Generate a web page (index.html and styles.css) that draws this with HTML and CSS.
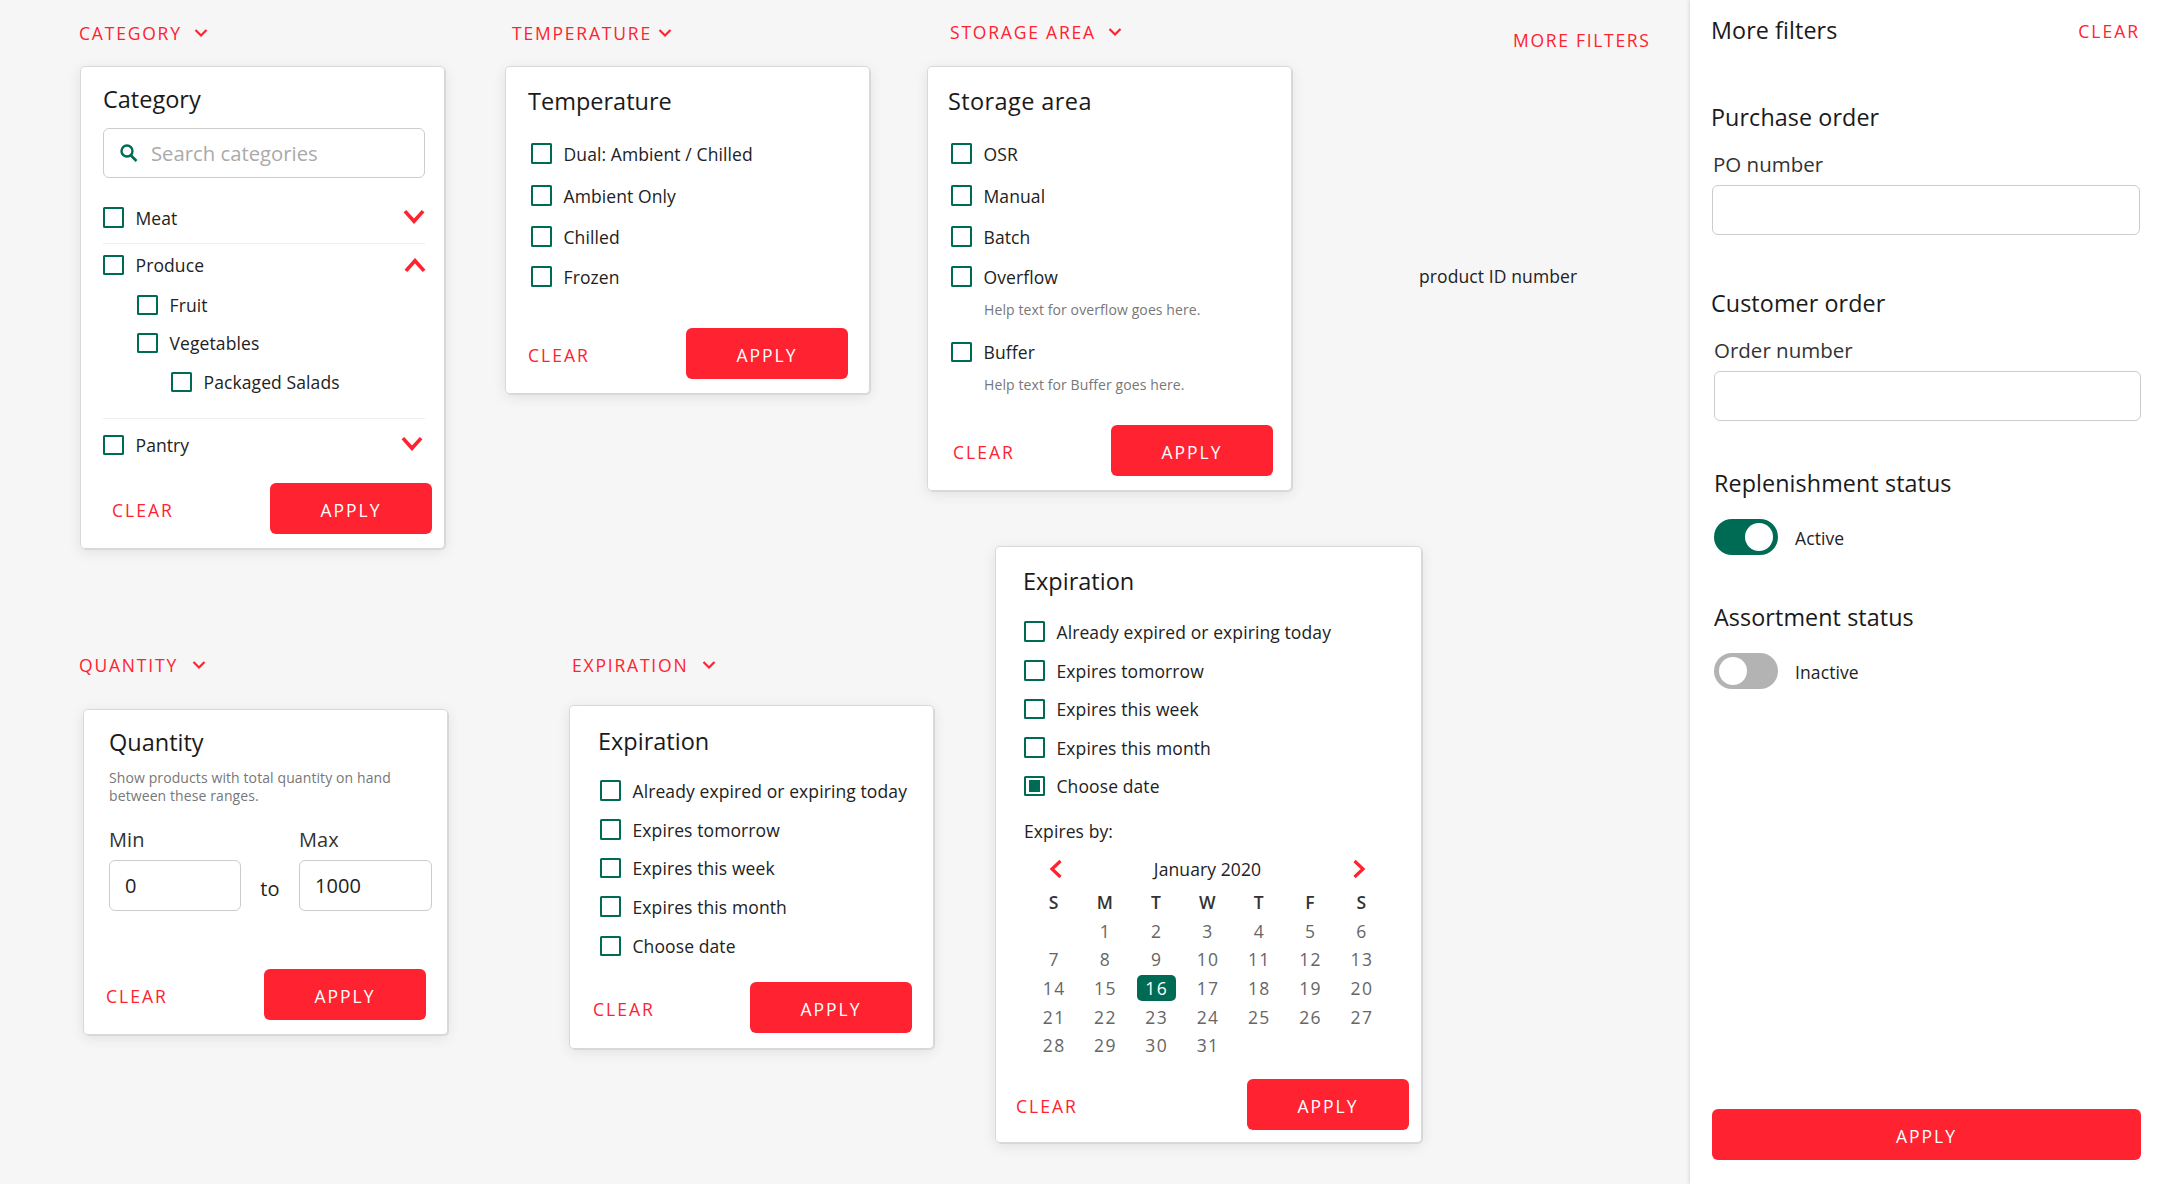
FILE: index.html
```html
<!DOCTYPE html>
<html lang="en">
<head>
    <meta charset="UTF-8">
    <title>Filters</title>
    <link rel="stylesheet" href="styles.css">
</head>
<body>
    <svg class="defs" width="0" height="0">
        <symbol id="chevron-down" viewBox="0 0 20 14"><path d="M1.500 2 10 11.500 18.500 2" fill="none" stroke="currentColor" stroke-width="3.400"/></symbol>
        <symbol id="chevron-up" viewBox="0 0 20 14"><path d="M1.500 12 10 2.500 18.500 12" fill="none" stroke="currentColor" stroke-width="3.400"/></symbol>
        <symbol id="chevron-small" viewBox="0 0 14 10"><path d="M1.500 2 7 7.500 12.500 2" fill="none" stroke="currentColor" stroke-width="2.200"/></symbol>
        <symbol id="chevron-left" viewBox="0 0 14 20"><path d="M11.500 2 3 10l8.500 8" fill="none" stroke="currentColor" stroke-width="3.200"/></symbol>
        <symbol id="chevron-right" viewBox="0 0 14 20"><path d="M2.500 2 11 10l-8.500 8" fill="none" stroke="currentColor" stroke-width="3.200"/></symbol>
    </svg>

    <main class="canvas">
        <section class="filter filter-category">
            <div class="filter-label">CATEGORY <svg class="chev-small"><use href="#chevron-small"/></svg></div>
            <div class="card card-category">
                <h3 class="card-title">Category</h3>
                <div class="search">
                    <svg class="search-icon" viewBox="0 0 20 20"><circle cx="8" cy="8" r="5.500" fill="none" stroke="currentColor" stroke-width="2.400"/><path d="m12 12.500 5.500 5.500" stroke="currentColor" stroke-width="2.600"/></svg>
                    <span>Search categories</span>
                </div>
                <div class="list list-tree">
                    <div class="row"><span class="box"></span>Meat<svg class="chev"><use href="#chevron-down"/></svg></div>
                    <div class="sep"></div>
                    <div class="row"><span class="box"></span>Produce<svg class="chev chev-open"><use href="#chevron-up"/></svg></div>
                    <div class="row indent-1"><span class="box"></span>Fruit</div>
                    <div class="row indent-1"><span class="box"></span>Vegetables</div>
                    <div class="row indent-2"><span class="box"></span>Packaged Salads</div>
                    <div class="sep sep-end"></div>
                    <div class="row"><span class="box"></span>Pantry<svg class="chev chev-pantry"><use href="#chevron-down"/></svg></div>
                </div>
                <div class="card-footer">
                    <span class="clear">CLEAR</span>
                    <span class="apply">APPLY</span>
                </div>
            </div>
        </section>

        <section class="filter filter-temperature">
            <div class="filter-label">TEMPERATURE <svg class="chev-small"><use href="#chevron-small"/></svg></div>
            <div class="card card-temperature">
                <h3 class="card-title">Temperature</h3>
                <div class="list list-temp">
                    <div class="row"><span class="box"></span>Dual: Ambient / Chilled</div>
                    <div class="row"><span class="box"></span>Ambient Only</div>
                    <div class="row"><span class="box"></span>Chilled</div>
                    <div class="row"><span class="box"></span>Frozen</div>
                </div>
                <div class="card-footer">
                    <span class="clear">CLEAR</span>
                    <span class="apply">APPLY</span>
                </div>
            </div>
        </section>

        <section class="filter filter-storage">
            <div class="filter-label">STORAGE AREA <svg class="chev-small"><use href="#chevron-small"/></svg></div>
            <div class="card card-storage">
                <h3 class="card-title">Storage area</h3>
                <div class="list list-storage">
                    <div class="row"><span class="box"></span>OSR</div>
                    <div class="row"><span class="box"></span>Manual</div>
                    <div class="row"><span class="box"></span>Batch</div>
                    <div class="row"><span class="box"></span>Overflow</div>
                    <div class="help">Help text for overflow goes here.</div>
                    <div class="row"><span class="box"></span>Buffer</div>
                    <div class="help">Help text for Buffer goes here.</div>
                </div>
                <div class="card-footer">
                    <span class="clear">CLEAR</span>
                    <span class="apply">APPLY</span>
                </div>
            </div>
        </section>

        <a class="more-filters">MORE FILTERS</a>
        <span class="product-id">product ID number</span>

        <section class="filter filter-quantity">
            <div class="filter-label">QUANTITY <svg class="chev-small"><use href="#chevron-small"/></svg></div>
            <div class="card card-quantity">
                <h3 class="card-title">Quantity</h3>
                <p class="card-note">Show products with total quantity on hand between these ranges.</p>
                <div class="range">
                    <label class="range-label">Min</label>
                    <span></span>
                    <label class="range-label">Max</label>
                    <div class="input">0</div>
                    <span class="range-to">to</span>
                    <div class="input">1000</div>
                </div>
                <div class="card-footer">
                    <span class="clear">CLEAR</span>
                    <span class="apply">APPLY</span>
                </div>
            </div>
        </section>

        <section class="filter filter-expiration">
            <div class="filter-label">EXPIRATION <svg class="chev-small"><use href="#chevron-small"/></svg></div>
            <div class="card card-expiration">
                <h3 class="card-title">Expiration</h3>
                <div class="list list-expiry">
                    <div class="row"><span class="box"></span>Already expired or expiring today</div>
                    <div class="row"><span class="box"></span>Expires tomorrow</div>
                    <div class="row"><span class="box"></span>Expires this week</div>
                    <div class="row"><span class="box"></span>Expires this month</div>
                    <div class="row"><span class="box"></span>Choose date</div>
                </div>
                <div class="card-footer">
                    <span class="clear">CLEAR</span>
                    <span class="apply">APPLY</span>
                </div>
            </div>
        </section>

        <section class="filter filter-calendar">
            <div class="card card-calendar">
                <h3 class="card-title">Expiration</h3>
                <div class="list list-expiry">
                    <div class="row"><span class="box"></span>Already expired or expiring today</div>
                    <div class="row"><span class="box"></span>Expires tomorrow</div>
                    <div class="row"><span class="box"></span>Expires this week</div>
                    <div class="row"><span class="box"></span>Expires this month</div>
                    <div class="row"><span class="box box-checked"></span>Choose date</div>
                </div>
                <div class="expires-by">Expires by:</div>
                <div class="month">
                    <svg class="chev-month"><use href="#chevron-left"/></svg>
                    <span>January 2020</span>
                    <svg class="chev-month"><use href="#chevron-right"/></svg>
                </div>
                <div class="calendar">
                    <b>S</b><b>M</b><b>T</b><b>W</b><b>T</b><b>F</b><b>S</b>
                    <span></span><span>1</span><span>2</span><span>3</span><span>4</span><span>5</span><span>6</span>
                    <span>7</span><span>8</span><span>9</span><span>10</span><span>11</span><span>12</span><span>13</span>
                    <span>14</span><span>15</span><span class="today">16</span><span>17</span><span>18</span><span>19</span><span>20</span>
                    <span>21</span><span>22</span><span>23</span><span>24</span><span>25</span><span>26</span><span>27</span>
                    <span>28</span><span>29</span><span>30</span><span>31</span>
                </div>
                <div class="card-footer">
                    <span class="clear">CLEAR</span>
                    <span class="apply">APPLY</span>
                </div>
            </div>
        </section>
    </main>

    <aside class="panel">
        <div class="panel-head">
            <h2 class="panel-title">More filters</h2>
            <span class="clear">CLEAR</span>
        </div>
        <h3 class="panel-heading heading-purchase">Purchase order</h3>
        <label class="panel-label label-po">PO number</label>
        <div class="panel-input input-po"></div>
        <h3 class="panel-heading heading-customer">Customer order</h3>
        <label class="panel-label label-order">Order number</label>
        <div class="panel-input input-order"></div>
        <h3 class="panel-heading heading-status">Replenishment status</h3>
        <div class="status">
            <span class="toggle toggle-on"><i></i></span>
            <span class="status-text">Active</span>
        </div>
        <h3 class="panel-heading heading-status">Assortment status</h3>
        <div class="status">
            <span class="toggle"><i></i></span>
            <span class="status-text">Inactive</span>
        </div>
        <span class="apply apply-wide">APPLY</span>
    </aside>
</body>
</html>
```
FILE: styles.css
```css
* {
    box-sizing: border-box;
}

body {
    margin: 0;
    width: 2162px;
    height: 1184px;
    overflow: hidden;
    display: flex;
    font-family: "Open Sans", "Liberation Sans", sans-serif;
    font-size: 17.5px;
    letter-spacing: 0.1px;
    color: #222;
    background: #f6f6f6;
}

.defs {
    position: absolute;
}

/* free canvas: each filter sits where the design sheet put it */
.canvas {
    position: relative;
    flex: 1;
}

.filter {
    position: absolute;
}

.filter-category { left: 80px; top: 22px; }
.filter-temperature { left: 505px; top: 22px; }
.filter-storage { left: 927px; top: 21px; }
.filter-quantity { left: 83px; top: 654px; }
.filter-expiration { left: 569px; top: 654px; }
.filter-calendar { left: 995px; top: 546px; }

.filter-label {
    display: flex;
    align-items: center;
    height: 22px;
    font-size: 17.5px;
    letter-spacing: 1.800px;
    color: #ff2230;
    white-space: nowrap;
}

.filter-category .filter-label { margin: 0 0 22px -1px; }
.filter-temperature .filter-label { margin: 0 0 22px 7px; }
.filter-storage .filter-label { margin: 0 0 23px 23px; }
.filter-quantity .filter-label { margin: 0 0 33px -4px; }
.filter-expiration .filter-label { margin: 0 0 29px 3px; }

.chev-small {
    width: 14px;
    height: 10px;
    margin-left: 12px;
}

.filter-temperature .chev-small { margin-left: 6px; }
.filter-quantity .chev-small,
.filter-expiration .chev-small { margin-left: 14px; }

.card {
    display: flex;
    flex-direction: column;
    width: 365px;
    padding-top: 20px;
    background: #fff;
    border-radius: 5px;
    box-shadow: inset 0 0 0 1px #d8d8d8, 1px 1px 0 #d8d8d8, 0 3px 14px rgba(0, 0, 0, 0.09);
}

.card-category { height: 483px; padding: 18px 13px 0 23px; }
.card-temperature { height: 328px; padding-left: 23px; padding-right: 22px; }
.card-storage { height: 425px; padding-left: 21px; padding-right: 19px; }
.card-quantity { height: 326px; padding: 18px 22px 0 26px; }
.card-expiration { height: 344px; padding: 21px 22px 0 29px; }
.card-calendar { width: 427px; height: 597px; padding-left: 28px; padding-right: 13px; }

.card-title {
    margin: 0;
    height: 30px;
    font-size: 23.5px;
    font-weight: 400;
    letter-spacing: 0;
    line-height: 30px;
    color: #1a1a1a;
}

.card-storage .card-title {
    letter-spacing: 0.4px;
}

.card-note {
    margin: 12px 0 0;
    font-size: 14px;
    line-height: 18px;
    color: #777;
}

.card-footer {
    display: flex;
    justify-content: space-between;
    align-items: center;
    margin-top: auto;
    margin-bottom: 15px;
}

.card-category .card-footer { margin-left: 9px; }
.card-storage .card-footer { margin-left: 5px; }
.card-quantity .card-footer { margin-left: -3px; }
.card-expiration .card-footer { margin-left: -5px; margin-bottom: 16px; }
.card-calendar .card-footer { margin-left: -7px; margin-bottom: 13px; }

.clear {
    padding-top: 2px;
    font-size: 17.5px;
    letter-spacing: 2px;
    color: #ff2230;
}

.apply {
    display: flex;
    align-items: center;
    justify-content: center;
    width: 162px;
    height: 51px;
    padding-top: 2px;
    font-size: 17.5px;
    letter-spacing: 2px;
    color: #fff;
    background: #ff2230;
    border-radius: 6px;
}

.search {
    display: flex;
    align-items: center;
    gap: 12px;
    width: 322px;
    height: 50px;
    margin-top: 14px;
    padding-left: 15px;
    font-size: 20.300px;
    letter-spacing: 0;
    color: #aaa;
    border: 1px solid #ccc;
    border-radius: 6px;
}

.search-icon {
    width: 20px;
    height: 20px;
    color: #006b54;
}

.list {
    display: grid;
    margin-top: 16px;
}

.list-tree {
    grid-template-rows: 51px 1px 42px 38px 38px 40px 17px 52px;
    width: 322px;
    margin-top: 14px;
}

.list-temp {
    grid-template-rows: 43px 41px 41px 39px;
    margin-left: 3px;
}

.list-storage {
    grid-template-rows: 43px 41px 41px 39px 38px 36px 30px;
    margin-left: 3px;
}

.list-expiry {
    grid-template-rows: 39px 39px 38px 39px 38px;
    margin-left: 2px;
}

.card-expiration .list-expiry {
    grid-template-rows: 39px 39px 38px 39px 40px;
    margin-top: 15px;
}

.card-calendar .list-expiry {
    margin-left: 1px;
}

.row {
    display: flex;
    align-items: center;
    gap: 12px;
    white-space: nowrap;
}

.indent-1 { margin-left: 34px; }
.indent-2 { margin-left: 68px; }

.box {
    flex: none;
    width: 20.500px;
    height: 20.500px;
    padding: 2.500px;
    border: 2.800px solid #006b54;
    border-radius: 1.500px;
}

.box-checked::before {
    content: "";
    display: block;
    height: 100%;
    background: #006b54;
}

.chev {
    width: 22px;
    height: 15px;
    margin: -2px 0 0 auto;
    color: #ff2230;
}

.chev-open {
    margin: 1px -1px 0 auto;
}

.chev-pantry {
    margin: -4px 2px 0 auto;
}

.sep {
    background: #eee;
}

.sep-end {
    border-bottom: 1px solid #eee;
    background: none;
}

.help {
    margin-left: 33px;
    font-size: 14px;
    letter-spacing: 0.1px;
    line-height: 28px;
    color: #777;
}

.help:last-child {
    padding-top: 1px;
}

.range {
    display: grid;
    grid-template-columns: 132px 58px 133px;
    grid-template-rows: 24px 51px;
    row-gap: 8px;
    margin-top: 23px;
}

.range-label {
    font-size: 20px;
    line-height: 24px;
    color: #333;
}

.input {
    display: flex;
    align-items: center;
    padding-left: 15px;
    font-size: 20px;
    border: 1px solid #ccc;
    border-radius: 6px;
}

.range-to {
    padding-top: 7px;
    font-size: 20px;
    line-height: 44px;
    text-align: center;
}

.expires-by {
    margin: 14px 0 0 1px;
    line-height: 24px;
}

.month {
    display: flex;
    justify-content: space-between;
    align-items: center;
    width: 359px;
    height: 26px;
    margin: 13px 0 0 5px;
    padding: 0 21px;
}

.chev-month {
    width: 14px;
    height: 20px;
    color: #ff2230;
}

.calendar {
    display: grid;
    grid-template-columns: repeat(7, 51.300px);
    grid-auto-rows: 28.700px;
    align-items: center;
    justify-items: center;
    margin: 5.600px 0 0 5.500px;
    color: #666;
    letter-spacing: 1.400px;
}

.calendar b {
    font-weight: 600;
    color: #333;
}

.today {
    width: 39px;
    line-height: 26px;
    text-align: center;
    color: #fff;
    background: #006b54;
    border-radius: 5px;
}

.more-filters {
    position: absolute;
    left: 1513px;
    top: 28px;
    font-size: 17.500px;
    letter-spacing: 1.700px;
    color: #ff2230;
}

.product-id {
    position: absolute;
    left: 1419px;
    top: 264px;
}

.panel {
    display: flex;
    flex-direction: column;
    flex: none;
    width: 472px;
    padding: 15px 22px 24px 21px;
    background: #fff;
    box-shadow: -1px 0 3px rgba(0, 0, 0, 0.12);
}

.panel-head {
    display: flex;
    justify-content: space-between;
    align-items: center;
    height: 30px;
}

.panel-title,
.panel-heading {
    margin: 0;
    height: 30px;
    font-size: 23.300px;
    font-weight: 400;
    letter-spacing: 0.100px;
    line-height: 30px;
    color: #1a1a1a;
}

.heading-purchase { margin-top: 57px; }
.heading-customer { margin-top: 53px; }
.heading-status { margin: 47px 0 0 3px; }

.panel-label {
    height: 24px;
    font-size: 20.500px;
    letter-spacing: 0;
    line-height: 24px;
    color: #333;
}

.label-po { margin: 20px 0 0 2px; }
.label-order { margin: 20px 0 0 3px; }

.panel-input {
    flex: none;
    height: 50px;
    border: 1px solid #ccc;
    border-radius: 6px;
}

.input-po { margin: 9px 0 0 1px; }
.input-order { margin: 9px -1px 0 3px; }

.status {
    display: flex;
    align-items: center;
    gap: 17px;
    margin: 21px 0 0 3px;
}

.status-text {
    padding-top: 2px;
}

.toggle {
    display: flex;
    align-items: center;
    width: 64px;
    height: 36px;
    padding: 0 5px;
    background: #b3b3b3;
    border-radius: 18px;
}

.toggle i {
    width: 28px;
    height: 28px;
    background: #fff;
    border-radius: 50%;
}

.toggle-on {
    justify-content: flex-end;
    background: #006b54;
}

.apply-wide {
    width: 100%;
    margin: auto 0 0 1px;
}
```
